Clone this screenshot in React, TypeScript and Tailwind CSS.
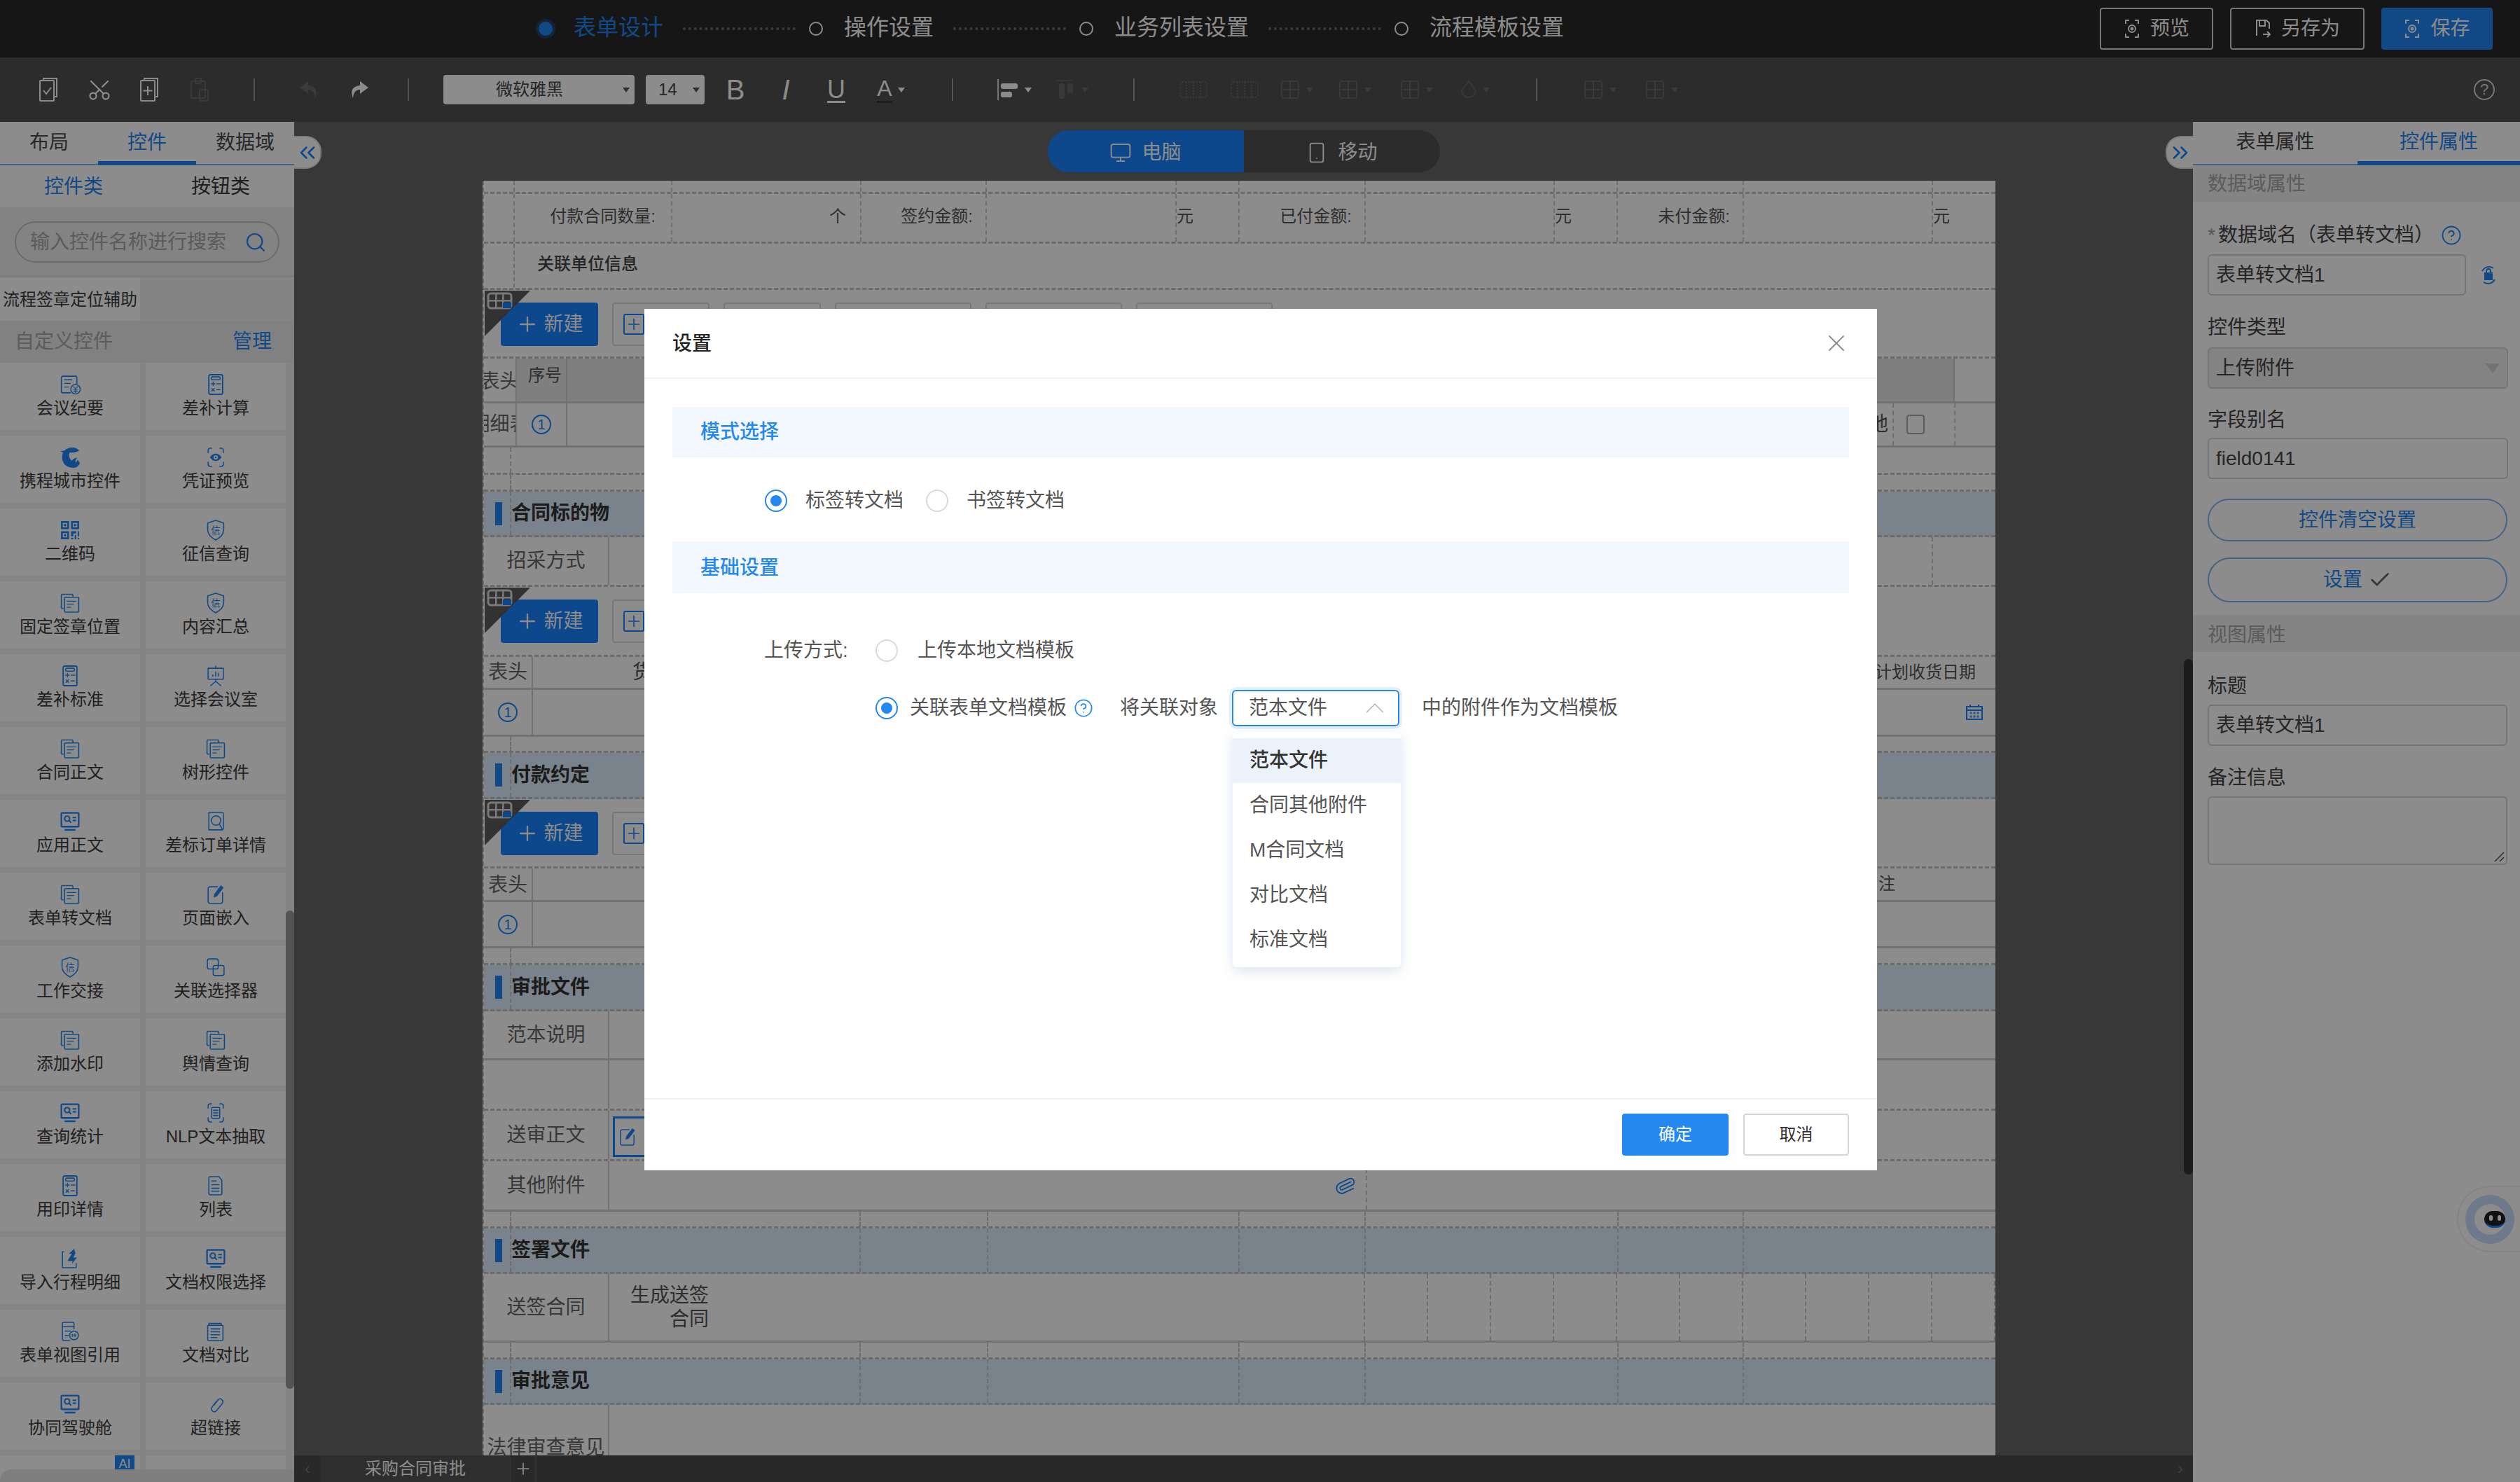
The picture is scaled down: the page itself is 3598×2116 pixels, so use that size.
import React from "react";
import { Scissors, ChevronUp, X, Check, Search, Monitor, Smartphone, Plus, Paperclip, CircleHelp, ChevronsLeft, ChevronsRight } from "lucide-react";

const FONT = "font-['Liberation_Sans','Noto_Sans_CJK_SC',sans-serif]";

type IK = "doc" | "yuan" | "calc" | "fish" | "scan" | "qr" | "shield" | "board" | "card" | "find" | "edit" | "link2" | "nlp" | "list" | "imp" | "quote" | "stack" | "chain";

function GlyphIcon({ k, className = "w-[30px] h-[30px]" }: { k: IK; className?: string }) {
  const common = { fill: "none", stroke: "currentColor", strokeWidth: 1.5, strokeLinecap: "round" as const, strokeLinejoin: "round" as const };
  let body: React.ReactNode = null;
  if (k === "doc") body = <g {...common}><path d="M5 22H4a1.500 1.500 0 0 1-1.500-1.500V4A1.500 1.500 0 0 1 4 2.500h13A1.500 1.500 0 0 1 18.500 4v1.500" /><rect x="7" y="6.500" width="19.500" height="20.500" rx="1.200" /><path d="M10.500 12h12M10.500 16h9M10.500 20.500h5" strokeWidth="1.200" /></g>;
  if (k === "yuan") body = <g {...common}><path d="M24 13V5a2 2 0 0 0-2-2H4.500a2 2 0 0 0-2 2v19a2 2 0 0 0 2 2H15" /><path d="M7 8h10M7 13h8M7 18h5" strokeWidth="1.300" /><circle cx="22" cy="21" r="6.500" /><path d="M19.500 17.500l2.500 3.500 2.500-3.500M22 21v4.500M19.500 22h5M19.500 24h5" strokeWidth="1.100" /></g>;
  if (k === "calc") body = <g {...common}><rect x="5" y="1" width="19" height="27" rx="2" strokeWidth="1.800" /><rect x="8.500" y="4" width="12" height="4" rx="1.500" /><path d="M8.500 13.500h5M11 11v5M16 13.500h5M9 20l3.500 3.500M12.500 20L9 23.500M16 21.500h4.500" strokeWidth="1.400" /></g>;
  if (k === "fish") body = <path fill="currentColor" d="M27 5C25 3 22 1 17 1 13 1 9 3 7 5L1 6l4 2c-2 4-2 10 1 15 3 4 8 6 13 6 5 0 8-3 9-7l-3-4c-1 2-2 3-2 4-2-2-1-5 2-7-3 0-6 1-8 4-4-3-5-8-3-11 4 0 9 0 13-3z" />;
  if (k === "scan") body = <g {...common}><path d="M9 2H7a3 3 0 0 0-3 3v3M20 2h2a3 3 0 0 1 3 3v3M9 27H7a3 3 0 0 1-3-3v-3M20 27h2a3 3 0 0 0 3-3v-3" /><path fill="currentColor" stroke="none" fillRule="evenodd" d="M6.500 14.500C9 11 11.500 9.500 14.500 9.500s5.500 1.500 8 5c-2.500 3.500-5 5-8 5s-5.500-1.500-8-5zM14.500 11.500a3 3 0 1 0 0 6 3 3 0 0 0 0-6z" /><circle cx="14.500" cy="14.500" r="1.200" fill="currentColor" stroke="none" /></g>;
  if (k === "qr") body = <g fill="currentColor"><path fillRule="evenodd" d="M2 2h11v11H2zM4.500 4.500v6h6v-6zM6 6h3v3H6zM16 2h11v11H16zM18.500 4.500v6h6v-6zM20 6h3v3h-3zM2 16h11v11H2zM4.500 18.500v6h6v-6zM6 20h3v3H6z" /><path d="M16 16h7v3h-4v4h-3zM25 16h2v7h-2zM16 25h3v2h-3zM21 21h2v6h-2zM25 25h2v2h-2z" /></g>;
  if (k === "shield") body = <g {...common}><path d="M14.500 1l11 3.500v9.500c0 6-4.500 10.500-11 14-6.500-3.500-11-8-11-14V4.500z" /><text x="14.500" y="19" fontSize="13" textAnchor="middle" fill="currentColor" stroke="none">信</text></g>;
  if (k === "board") body = <g {...common}><path d="M14.500 1v3M4 4h21v15H4zM14.500 19v3M14.500 22l-7 6M14.500 22l7 6" /><path d="M10.500 15v-2M14.500 15V9M18.500 15v-4" /></g>;
  if (k === "card") body = <g><rect x="2.500" y="2.500" width="24" height="19" rx="1.500" fill="none" stroke="currentColor" strokeWidth="2.200" /><circle cx="10.500" cy="10.500" r="3.500" fill="none" stroke="currentColor" strokeWidth="2" /><path d="M13 13l3 3M18 9h5M18 13h5" stroke="currentColor" strokeWidth="2" /><path d="M7 26h15" stroke="currentColor" strokeWidth="2.400" /></g>;
  if (k === "find") body = <g {...common}><path d="M25 5v19a2 2 0 0 1-2 2H5V2h18a2 2 0 0 1 2 2" /><circle cx="15" cy="13" r="6.500" /><path d="M19.500 18l4 7" /></g>;
  if (k === "edit") body = <g {...common}><path d="M17 4H7a3 3 0 0 0-3 3v17a3 3 0 0 0 3 3h14a3 3 0 0 0 3-3V12" /><path fill="currentColor" stroke="none" d="M21.500 2l4 3-9 12-5 2 1-5z" /></g>;
  if (k === "link2") body = <g {...common}><rect x="3" y="3" width="15" height="14" rx="2.500" /><rect x="11" y="12" width="15" height="14" rx="2.500" fill="none" /></g>;
  if (k === "nlp") body = <g {...common}><path d="M9 2H7a3 3 0 0 0-3 3v3M20 2h2a3 3 0 0 1 3 3v3M9 27H7a3 3 0 0 1-3-3v-3M20 27h2a3 3 0 0 0 3-3v-3" /><rect x="9" y="7" width="11" height="15" rx="1" /><path d="M11.500 11h6M11.500 14.500h6M11.500 18h6" /></g>;
  if (k === "list") body = <g {...common}><path d="M19 2H7a2 2 0 0 0-2 2v21a2 2 0 0 0 2 2h14a2 2 0 0 0 2-2V7z" /><path d="M9 8h6M9 13h10M9 18h10M9 22h10" /></g>;
  if (k === "imp") body = <g {...common}><path d="M6 5H4v22h19v-6" /><path fill="currentColor" stroke="none" d="M20 1l-7 7h4l-6 10h7l-1 4 7-9h-5l3-6z" /></g>;
  if (k === "quote") body = <g {...common}><path d="M20 11V4a2 2 0 0 0-2-2H6a2 2 0 0 0-2 2v21a2 2 0 0 0 2 2h8" /><path d="M4 8h16M8 14h7M8 20h4" /><circle cx="20" cy="20" r="6" /><path d="M18 19v2M21.500 19v2" strokeWidth="2" /></g>;
  if (k === "stack") body = <g {...common}><path d="M5 6V3.500h17V6" /><rect x="3.500" y="6" width="21" height="21" rx="1" /><path d="M8 11h12M8 15h12M8 19h12M8 23h8" /></g>;
  if (k === "chain") body = <g {...common}><path d="M12 16l6-8a4 4 0 0 1 6 5l-9 11a4 4 0 0 1-6-5l6-8" /></g>;
  return <svg viewBox="0 0 29 29" className={className}>{body}</svg>;
}

const controls: [IK, string, IK, string][] = [
  ["yuan", "会议纪要", "calc", "差补计算"],
  ["fish", "携程城市控件", "scan", "凭证预览"],
  ["qr", "二维码", "shield", "征信查询"],
  ["doc", "固定签章位置", "shield", "内容汇总"],
  ["calc", "差补标准", "board", "选择会议室"],
  ["doc", "合同正文", "doc", "树形控件"],
  ["card", "应用正文", "find", "差标订单详情"],
  ["doc", "表单转文档", "edit", "页面嵌入"],
  ["shield", "工作交接", "link2", "关联选择器"],
  ["doc", "添加水印", "doc", "舆情查询"],
  ["card", "查询统计", "nlp", "NLP文本抽取"],
  ["calc", "用印详情", "list", "列表"],
  ["imp", "导入行程明细", "card", "文档权限选择"],
  ["quote", "表单视图引用", "stack", "文档对比"],
  ["card", "协同驾驶舱", "chain", "超链接"],
];

function Cell({ k, t }: { k: IK; t: string }) {
  return (
    <div className="w-[200px] h-[96px] bg-white flex flex-col items-center pt-[16px] text-[24px] leading-[32px] text-[#3c3c3c]">
      <span className="text-[#1f86f5] h-[30px] mb-[3px]"><GlyphIcon k={k} /></span>
      <span>{t}</span>
    </div>
  );
}

function LeftPanel() {
  return (
    <aside className="w-[420px] shrink-0 bg-white flex flex-col">
      <div className="h-[62px] shrink-0 flex border-b-2 border-[#7fb6ee] text-[28px] leading-[60px] text-center text-[#4a4a4a]">
        <div className="w-[140px]">布局</div>
        <div className="w-[140px] text-[#1f86f5] border-b-[6px] border-[#1f86f5] h-[62px]">控件</div>
        <div className="w-[140px]">数据域</div>
      </div>
      <div className="h-[60px] shrink-0 flex text-[28px] leading-[62px] text-center text-[#3a3a3a]">
        <div className="w-[210px] text-[#1f86f5]">控件类</div>
        <div className="w-[210px]">按钮类</div>
      </div>
      <div className="h-[100px] shrink-0 bg-[#eeeeee] px-[21px] pt-[20px] border-b-[3px] border-[#e4e4e4]">
        <div className="h-[59px] rounded-full border-2 border-[#c4c4c4] flex items-center pl-[20px] pr-[16px] text-[28px] text-[#a6a6a6]">
          <span className="flex-1">输入控件名称进行搜索</span>
          <Search className="w-[32px] h-[32px] text-[#1f86f5]" strokeWidth={1.6} />
        </div>
      </div>
      <div className="relative flex-1 overflow-hidden bg-[#f0f0f0]">
        <div className="w-[200px] h-[62px] bg-white text-[24px] leading-[64px] text-[#3c3c3c] whitespace-nowrap pl-[4px]">流程签章定位辅助</div>
        <div className="h-[60px] flex items-center justify-between pl-[21px] pr-[32px] text-[28px] text-[#a8a8a8] bg-[#ececec]">
          <span>自定义控件</span>
          <span className="text-[#1f86f5]">管理</span>
        </div>
        <div className="grid grid-cols-[200px_200px] gap-x-[8px] gap-y-[8px]">
          {controls.map((r) => (
            <React.Fragment key={r[1]}>
              <Cell k={r[0]} t={r[1]} />
              <Cell k={r[2]} t={r[3]} />
            </React.Fragment>
          ))}
          <div className="w-[200px] h-[96px] bg-white relative">
            <div className="absolute right-[8px] top-0 w-[28px] h-[20px] bg-[#1f86f5] text-white text-[18px] leading-[24px] text-center overflow-hidden">AI</div>
          </div>
          <div className="w-[200px] h-[96px] bg-white" />
        </div>
        <div className="absolute right-0 top-[904px] w-[12px] h-[683px] rounded-full bg-[#999999]" />
        <div className="absolute left-0 right-0 bottom-0 h-[18px] bg-[#e8e8e8] rounded-tl-[16px]" />
      </div>
    </aside>
  );
}

function Slot({ w, children }: { w: string; children?: React.ReactNode }) {
  return <div className={`shrink-0 flex items-center justify-center ${w}`}>{children}</div>;
}
const Sep = () => <div className="w-[2px] h-[32px] bg-[#9a9a9a]" />;
const Caret = ({ dim }: { dim?: boolean }) => <span className={`ml-[8px] w-0 h-0 border-x-[5px] border-x-transparent border-t-[7px] ${dim ? "border-t-[#6a6a6a]" : "border-t-white"}`} />;
const DimBlock = () => (
  <svg viewBox="0 0 44 28" className="w-[44px] h-[28px] text-[#686868]"><g fill="none" stroke="currentColor" strokeWidth="2" strokeDasharray="2 2"><rect x="3" y="3" width="38" height="22" rx="3" /><path d="M12 3v22M22 3v22M32 3v22" /></g></svg>
);
const DimSq = () => (
  <svg viewBox="0 0 30 30" className="w-[30px] h-[30px] text-[#686868]"><g fill="none" stroke="currentColor" strokeWidth="2"><rect x="3" y="3" width="24" height="24" rx="3" /><path d="M3 15h24M15 3v24" /></g></svg>
);

function Toolbar() {
  return (
    <div className="h-[92px] shrink-0 bg-[#505050] flex items-center pl-[32px] pr-[36px] text-white">
      <Slot w="w-[74px]"><svg viewBox="0 0 30 36" className="w-[30px] h-[36px]"><g fill="none" stroke="currentColor" strokeWidth="2"><path d="M8 5V2h19v26h-4" /><rect x="3" y="5" width="20" height="29" rx="1" /><path d="M8 19l4 5 7-9" /></g></svg></Slot>
      <Slot w="w-[72px]"><Scissors className="w-[36px] h-[36px] -rotate-90" strokeWidth={1.5} /></Slot>
      <Slot w="w-[70px]"><svg viewBox="0 0 30 36" className="w-[30px] h-[36px]"><g fill="none" stroke="currentColor" strokeWidth="2"><path d="M8 5V2h19v26h-4" /><rect x="3" y="5" width="20" height="29" rx="1" /><path d="M13 13v13M6.500 19.500h13" /></g></svg></Slot>
      <Slot w="w-[74px]"><svg viewBox="0 0 30 36" className="w-[30px] h-[36px] text-[#6a6a6a]"><g fill="none" stroke="currentColor" strokeWidth="2"><rect x="3" y="6" width="20" height="24" rx="2" /><rect x="9" y="2" width="8" height="7" rx="1" /><rect x="15" y="18" width="12" height="16" rx="2" /></g></svg></Slot>
      <Slot w="w-[82px]"><Sep /></Slot>
      <Slot w="w-[74px]"><svg viewBox="0 0 30 30" className="w-[30px] h-[30px] text-[#6a6a6a]"><path fill="currentColor" d="M14 3L2 12l12 9v-6c6 0 9 4 10 12 4-10 1-17-10-18z" /></svg></Slot>
      <Slot w="w-[70px]"><svg viewBox="0 0 30 30" className="w-[30px] h-[30px]"><path fill="currentColor" d="M16 3l12 9-12 9v-6c-6 0-9 4-10 12-4-10-1-17 10-18z" /></svg></Slot>
      <Slot w="w-[70px]"><Sep /></Slot>
      <div className="ml-[15px] w-[273px] h-[42px] rounded-[4px] bg-white text-[#444] text-[24px] leading-[42px] flex items-center pl-[75px] pr-[7px]">
        <span className="flex-1">微软雅黑</span><span className="w-0 h-0 border-x-[5px] border-x-transparent border-t-[7px] border-t-[#555]" />
      </div>
      <div className="ml-[16px] w-[84px] h-[42px] rounded-[4px] bg-white text-[#444] text-[24px] flex items-center pl-[18px] pr-[7px]">
        <span className="flex-1">14</span><span className="w-0 h-0 border-x-[5px] border-x-transparent border-t-[7px] border-t-[#555]" />
      </div>
      <Slot w="w-[72px] ml-[8px] text-[40px] leading-none font-normal">B</Slot>
      <Slot w="w-[72px] text-[40px] leading-none italic">I</Slot>
      <Slot w="w-[72px] text-[36px] leading-none underline underline-offset-[4px]">U</Slot>
      <Slot w="w-[84px] text-[32px] leading-none"><span className="border-b-[3px] border-[#333] pb-[2px]">A</span><Caret /></Slot>
      <Slot w="w-[92px]"><Sep /></Slot>
      <Slot w="w-[84px]"><svg viewBox="0 0 32 30" className="w-[32px] h-[30px]"><path d="M2 0v30" stroke="currentColor" strokeWidth="1.500" /><rect x="6" y="6" width="24" height="8" rx="3" fill="currentColor" /><rect x="6" y="18" width="16" height="8" rx="3" fill="currentColor" /></svg><Caret /></Slot>
      <Slot w="w-[80px]"><svg viewBox="0 0 30 30" className="w-[30px] h-[30px] text-[#686868]"><path d="M2 2h24" stroke="currentColor" strokeWidth="1.500" /><rect x="6" y="6" width="8" height="22" rx="3" fill="currentColor" /><rect x="18" y="6" width="8" height="14" rx="3" fill="currentColor" /></svg><Caret dim /></Slot>
      <Slot w="w-[98px]"><Sep /></Slot>
      <Slot w="w-[72px]"><DimBlock /></Slot>
      <Slot w="w-[74px]"><DimBlock /></Slot>
      <Slot w="w-[74px]"><DimSq /><Caret dim /></Slot>
      <Slot w="w-[92px]"><DimSq /><Caret dim /></Slot>
      <Slot w="w-[84px]"><DimSq /><Caret dim /></Slot>
      <Slot w="w-[84px]"><svg viewBox="0 0 24 30" className="w-[24px] h-[30px] text-[#686868]"><path d="M12 3L2 16a10 10 0 0 0 20 0z" fill="none" stroke="currentColor" strokeWidth="2" /></svg><Caret dim /></Slot>
      <Slot w="w-[92px]"><Sep /></Slot>
      <Slot w="w-[88px]"><DimSq /><Caret dim /></Slot>
      <Slot w="w-[88px]"><DimSq /><Caret dim /></Slot>
      <div className="ml-auto w-[30px] h-[30px] rounded-full border-2 border-[#d8d8d8] text-[#d8d8d8] text-[22px] leading-[26px] text-center">?</div>
    </div>
  );
}

function StepDash() {
  return <div className="ml-[28px] mr-[19px] w-[161px] border-t-[4px] border-dotted border-[#6e6e6e]" />;
}
const StepRing = () => <div className="w-[20px] h-[20px] rounded-full border-2 border-white mr-[30px]" />;
const ScanI = () => (
  <svg viewBox="0 0 24 28" className="w-[24px] h-[28px]"><g fill="none" stroke="currentColor" strokeWidth="2"><path d="M8 2H3v5M16 2h5v5M8 26H3v-5M16 26h5v-5" /><circle cx="12" cy="14" r="5" /><circle cx="12" cy="14" r="1.500" fill="currentColor" /></g></svg>
);

function TopBar() {
  return (
    <header className="h-[82px] shrink-0 bg-[#282828] flex items-center pl-[765px] pr-[39px] text-white text-[32px]">
      <div className="w-[28px] h-[28px] rounded-full bg-[#1f86f5]/30 flex items-center justify-center mr-[26px]">
        <div className="w-[20px] h-[20px] rounded-full bg-[#1f86f5]" />
      </div>
      <span className="text-[#1f86f5] mb-[4px]">表单设计</span>
      <StepDash /><StepRing /><span className="mb-[4px]">操作设置</span>
      <StepDash /><StepRing /><span className="mb-[4px]">业务列表设置</span>
      <StepDash /><StepRing /><span className="mb-[4px]">流程模板设置</span>
      <div className="ml-auto flex gap-[24px] text-[28px]">
        <button className="w-[162px] h-[60px] rounded-[4px] border-2 border-[#d8d8d8] flex items-center justify-center gap-[14px]">
          <ScanI />预览
        </button>
        <button className="w-[192px] h-[60px] rounded-[4px] border-2 border-[#d8d8d8] flex items-center justify-center gap-[14px]">
          <svg viewBox="0 0 24 28" className="w-[24px] h-[28px]"><g fill="none" stroke="currentColor" strokeWidth="2"><path d="M3 24V2h14l4 4v8" /><path d="M7 2v8h8V2" /><path d="M12 22h10M18 18l4 4-4 4" /></g></svg>另存为
        </button>
        <button className="w-[159px] h-[60px] rounded-[4px] bg-[#1f86f5] flex items-center justify-center gap-[14px]">
          <ScanI />保存
        </button>
      </div>
    </header>
  );
}

const rowB = "flex shrink-0 border-b-[3px] border-dashed border-[#c4c4c4]";
const rowS = "flex shrink-0 border-b-[3px] border-[#d0d0d0]";
const vd = "border-r-2 border-dashed border-[#c8c8c8]";

function Guides() {
  return (
    <div className="flex h-full w-full">
      <div className={`w-[39px] ${vd}`} />
      <div className={`w-[499px] ${vd}`} />
      <div className={`w-[182px] ${vd}`} />
      <div className={`w-[359px] ${vd}`} />
      <div className={`w-[180px] ${vd}`} />
      <div className={`w-[361px] ${vd}`} />
      <div className={`w-[179px] ${vd}`} />
    </div>
  );
}
function Section({ t, h }: { t: string; h: string }) {
  return (
    <div className={`${rowB} ${h} relative bg-[#deeefd]`}>
      <Guides />
      <div className="absolute left-[16px] top-0 bottom-0 flex items-center font-bold text-[28px] text-[#333]">
        <span className="w-[10px] h-[33px] bg-[#1f86f5] mr-[13px]" />{t}
      </div>
    </div>
  );
}
function Gap({ h }: { h: string }) {
  return <div className={`${rowB} ${h}`}><Guides /></div>;
}
function Label({ t }: { t: string }) {
  return <div className="w-[179px] shrink-0 border-r-2 border-[#d0d0d0] flex items-center justify-center text-[28px] text-[#666]">{t}</div>;
}
function ToolRow({ h, outline }: { h: string; outline: string[] }) {
  return (
    <div className={`${rowB} ${h} relative pt-[18px] pl-[24px] gap-[20px]`}>
      <div className="w-[139px] h-[62px] rounded-[4px] bg-[#1a84ff] text-white text-[28px] flex items-center justify-center gap-[6px]"><Plus className="w-[34px] h-[34px]" strokeWidth={1.6} />新建</div>
      {outline.map((w, i) => <div key={i} className={`h-[62px] rounded-[4px] border-2 border-[#d8d8d8] flex items-center pl-[14px] ${w}`}><span className="text-[#1a84ff]"><Plus className="w-[30px] h-[30px] border-2 border-[#1a84ff] rounded-[3px]" strokeWidth={1.500} /></span></div>)}
      <svg viewBox="0 0 65 65" className="absolute left-[1px] top-[1px] w-[65px] h-[65px]">
        <path d="M0 0H65L0 65z" fill="#5c5c5c" />
        <rect x="5" y="4" width="33" height="21" rx="4" fill="none" stroke="#dcdcdc" strokeWidth="3" />
        <g fill="#dcdcdc"><rect x="15" y="4" width="2.500" height="21" /><rect x="25" y="4" width="2.500" height="21" /><rect x="5" y="13" width="33" height="2.500" /></g>
        <rect x="26" y="17" width="12" height="8" fill="#1a84ff" />
      </svg>
    </div>
  );
}
const Num = () => <div className="w-[28px] h-[28px] rounded-full border-2 border-[#1a84ff] text-[#1a84ff] text-[20px] leading-[24px] text-center">1</div>;

function FormSheet() {
  return (
    <div className="ml-[269px] mt-[12px] w-[2160px] flex-1 min-h-0 overflow-hidden bg-white flex flex-col text-[24px] text-[#555] border-l-2 border-dashed border-[#c8c8c8]">
      <div className={`${rowB} h-[19px]`}>
        <div className={`w-[44px] ${vd}`} /><div className={`w-[225px] ${vd}`} /><div className={`w-[270px] ${vd}`} /><div className={`w-[179px] ${vd}`} /><div className={`w-[271px] ${vd}`} /><div className={`w-[90px] ${vd}`} /><div className={`w-[180px] ${vd}`} /><div className={`w-[270px] ${vd}`} /><div className={`w-[90px] ${vd}`} /><div className={`w-[180px] ${vd}`} /><div className={`w-[270px] ${vd}`} />
      </div>
      <div className={`${rowB} h-[71px] items-stretch leading-[64px]`}>
        <div className={`w-[44px] ${vd}`} />
        <div className={`w-[225px] ${vd} text-right pr-[22px]`}>付款合同数量:</div>
        <div className={`w-[270px] ${vd} text-right pr-[20px]`}>个</div>
        <div className={`w-[179px] ${vd} text-right pr-[18px]`}>签约金额:</div>
        <div className={`w-[271px] ${vd}`} />
        <div className={`w-[90px] ${vd}`}>元</div>
        <div className={`w-[180px] ${vd} text-right pr-[18px]`}>已付金额:</div>
        <div className={`w-[270px] ${vd}`} />
        <div className={`w-[90px] ${vd}`}>元</div>
        <div className={`w-[180px] ${vd} text-right pr-[18px]`}>未付金额:</div>
        <div className={`w-[270px] ${vd}`} />
        <div>元</div>
      </div>
      <div className={`${rowB} h-[66px] items-stretch`}>
        <div className={`w-[44px] ${vd}`} /><div className="pl-[32px] leading-[58px] text-[24px] font-medium text-[#444]">关联单位信息</div>
      </div>
      <ToolRow h="h-[98px]" outline={["w-[139px]", "w-[139px]", "w-[195px]", "w-[195px]", "w-[195px]"]} />
      <div className={`${rowS} h-[64px]`}>
        <div className="w-[47px] overflow-hidden flex items-center justify-center border-r-2 border-[#d0d0d0] text-[28px] text-[#666] whitespace-nowrap pt-[4px]">表头</div>
        <div className="w-[72px] border-r-2 border-[#d0d0d0] bg-[#e8e8e8] pl-[16px] leading-[48px]">序号</div>
        <div className="w-[1981px] bg-[#e8e8e8] border-r-2 border-[#d0d0d0]" />
      </div>
      <div className={`${rowS} h-[63px]`}>
        <div className="w-[47px] overflow-hidden flex items-center justify-center border-r-2 border-[#d0d0d0] text-[28px] text-[#666] whitespace-nowrap"><span className="shrink-0">明细表</span></div>
        <div className="w-[72px] border-r-2 border-[#d0d0d0] flex items-center justify-center"><Num /></div>
        <div className="w-[1892px] flex items-center justify-end pr-[6px]"><span className="text-[28px]">地</span></div>
        <div className="w-[90px] border-l-2 border-dashed border-[#c8c8c8] border-r-2 flex items-center pl-[18px]"><span className="w-[26px] h-[28px] rounded-[4px] border-2 border-[#a8a8a8]" /></div>
      </div>
      <Gap h="h-[39px]" />
      <Gap h="h-[24px]" />
      <Section t="合同标的物" h="h-[65px]" />
      <div className={`${rowB} h-[71px]`}><Label t="招采方式" /><div className={`w-[1890px] ${vd}`} /></div>
      <ToolRow h="h-[100px]" outline={["w-[139px]"]} />
      <div className={`${rowS} h-[47px]`}>
        <div className="w-[70px] border-r-2 border-[#d0d0d0] text-[28px] text-[#666] leading-[44px] text-center">表头</div>
        <div className="w-[2086px] flex justify-between pl-[142px] pr-[26px] text-[#555] leading-[44px]"><span className="text-[28px]">货</span><span>计划收货日期</span></div>
      </div>
      <div className={`${rowS} h-[67px]`}>
        <div className="w-[70px] border-r-2 border-[#d0d0d0] flex items-center justify-center"><Num /></div>
        <div className="w-[2086px] flex items-center justify-end pr-[16px]">
          <svg viewBox="0 0 24 22" className="w-[24px] h-[22px] text-[#1a84ff]"><g fill="none" stroke="currentColor" strokeWidth="2"><rect x="1" y="3" width="22" height="18" /><path d="M1 8h22" /><path d="M6 11h2v2H6zM11 11h2v2h-2zM16 11h2v2h-2zM6 16h2v2H6zM11 16h2v2h-2zM16 16h2v2h-2z" strokeWidth="1" /><path d="M6 0v4M18 0v4" /></g></svg>
        </div>
      </div>
      <Gap h="h-[23px]" />
      <Section t="付款约定" h="h-[66px]" />
      <ToolRow h="h-[99px]" outline={["w-[139px]"]} />
      <div className={`${rowS} h-[48px]`}>
        <div className="w-[70px] border-r-2 border-[#d0d0d0] text-[28px] text-[#666] leading-[48px] text-center">表头</div>
        <div className="ml-[1921px] text-[24px] leading-[44px] text-[#555]">注</div>
      </div>
      <div className={`${rowS} h-[66px]`}>
        <div className="w-[70px] border-r-2 border-[#d0d0d0] flex items-center justify-center"><Num /></div>
      </div>
      <Gap h="h-[24px]" />
      <Section t="审批文件" h="h-[66px]" />
      <div className={`${rowS} h-[70px]`}><Label t="范本说明" /></div>
      <div className={`${rowB} h-[72px]`}><Label t="" /></div>
      <div className={`${rowB} h-[72px]`}><Label t="送审正文" />
        <div className="ml-[5px] mt-[8px] w-[60px] h-[58px] border-[3px] border-[#1a84ff] flex items-center pl-[4px] text-[#1a84ff]"><GlyphIcon k="edit" className="w-[28px] h-[28px]" /></div>
      </div>
      <div className={`${rowS} h-[72px]`}><Label t="其他附件" />
        <div className="w-[1080px] flex items-center justify-end pr-[14px]"><Paperclip className="w-[30px] h-[30px] text-[#1a84ff] rotate-[20deg]" strokeWidth={1.500} /></div>
        <div className="border-l-2 border-dashed border-[#c8c8c8]" />
      </div>
      <Gap h="h-[24px]" />
      <Section t="签署文件" h="h-[65px]" />
      <div className={`${rowS} h-[98px]`}><Label t="送签合同" />
        <div className={`w-[1080px] ${vd} flex items-center`}>
          <div className="w-[148px] pr-[6px] text-right text-[28px] leading-[34px] text-[#555]">生成送签<br />合同</div>
        </div>
        {[0, 1, 2, 3, 4, 5, 6, 7, 8, 9].map((i) => <div key={i} className={`w-[90px] ${vd}`} />)}
      </div>
      <Gap h="h-[24px]" />
      <Section t="审批意见" h="h-[65px]" />
      <div className="flex shrink-0 h-[122px]"><div className="w-[179px] shrink-0 border-r-2 border-[#d0d0d0] flex items-center justify-center text-[28px] text-[#666] whitespace-nowrap">法律审查意见</div></div>
    </div>
  );
}

function Center() {
  return (
    <main className="relative flex-1 min-w-0 bg-[#666666] flex flex-col">
      <div className="flex shrink-0 self-center mt-[12px] w-[560px] h-[60px] rounded-full overflow-hidden text-white text-[28px]">
        <div className="w-[280px] pt-[3px] bg-[#1a84ff] flex items-center justify-center gap-[14px]"><Monitor className="w-[32px] h-[32px]" strokeWidth={1.400} />电脑</div>
        <div className="w-[280px] pt-[3px] bg-[#505050] flex items-center justify-center gap-[14px]"><Smartphone className="w-[32px] h-[32px]" strokeWidth={1.400} />移动</div>
      </div>
      <FormSheet />
      <div className="h-[38px] shrink-0 bg-[#4c4c4c] flex items-center text-[24px] text-white">
        <div className="w-[38px] text-center text-[#777]">‹</div>
        <div className="w-[270px] h-full bg-[#555] text-center leading-[38px]">采购合同审批</div>
        <div className="w-[38px] h-full border-x-2 border-[#5a5a5a] flex items-center justify-center"><Plus className="w-[26px] h-[26px]" strokeWidth={1.600} /></div>
        <div className="ml-auto mr-[14px] text-[#777]">›</div>
      </div>
      <div className="absolute left-0 top-[20px] w-[39px] h-[47px] rounded-r-[22px] bg-white border-2 border-l-0 border-[#e2e2e2] text-[#1a84ff] flex items-center justify-center"><ChevronsLeft className="w-[36px] h-[36px]" strokeWidth={1.800} /></div>
      <div className="absolute right-0 top-[20px] w-[39px] h-[47px] rounded-l-[22px] bg-white border-2 border-r-0 border-[#e2e2e2] text-[#1a84ff] flex items-center justify-center"><ChevronsRight className="w-[36px] h-[36px]" strokeWidth={1.800} /></div>
      <div className="absolute right-0 top-[767px] w-[13px] h-[736px] rounded-full bg-[#333333]" />
    </main>
  );
}

const inputCls = "h-[59px] rounded-[6px] border-2 border-[#d4d4d4] px-[10px] flex items-center text-[28px] text-[#444]";

function RightPanel() {
  return (
    <aside className="relative w-[467px] shrink-0 bg-white flex flex-col text-[28px] text-[#444]">
      <div className="h-[62px] shrink-0 flex border-b-2 border-[#7fb6ee] leading-[58px] text-center">
        <div className="w-[235px]">表单属性</div>
        <div className="w-[232px] h-[62px] text-[#1f86f5] border-b-[6px] border-[#1f86f5]">控件属性</div>
      </div>
      <div className="h-[52px] shrink-0 bg-[#f0f0f0] pl-[21px] leading-[54px] text-[#a8a8a8]">数据域属性</div>
      <div className="px-[21px] pt-[28px] flex flex-col">
        <div className="leading-[40px] whitespace-nowrap flex items-center"><span className="text-[#999] mr-[4px]">*</span>数据域名（表单转文档）<CircleHelp className="w-[30px] h-[30px] text-[#1f86f5] ml-[10px]" strokeWidth={1.500} /></div>
        <div className="flex items-center mt-[7px]">
          <div className={`${inputCls} w-[369px]`}>表单转文档1</div>
          <svg viewBox="0 0 28 32" className="ml-[18px] w-[28px] h-[32px] text-[#1f86f5]"><g fill="none" stroke="currentColor" strokeWidth="2"><path d="M5 10a11 11 0 0 1 16-4M23 22a11 11 0 0 1-16 4" /><rect x="9" y="13" width="10" height="9" fill="currentColor" /><path d="M11 13v-3a3 3 0 0 1 6 0v3" /></g></svg>
        </div>
        <div className="mt-[26px] leading-[40px]">控件类型</div>
        <div className={`${inputCls} mt-[8px] w-[429px] bg-[#eeeeee] justify-between`}>上传附件<span className="w-0 h-0 border-x-[10px] border-x-transparent border-t-[14px] border-t-[#cfcfcf]" /></div>
        <div className="mt-[25px] leading-[40px]">字段别名</div>
        <div className={`${inputCls} mt-[5px] w-[429px]`}>field0141</div>
        <div className="mt-[28px] w-[428px] h-[61px] rounded-full border-2 border-[#7fb6ee] text-[#1f86f5] flex items-center justify-center">控件清空设置</div>
        <div className="mt-[23px] w-[428px] h-[64px] rounded-full border-2 border-[#7fb6ee] text-[#1f86f5] flex items-center justify-center gap-[8px]">设置<Check className="w-[34px] h-[34px] text-[#666]" strokeWidth={2} /></div>
      </div>
      <div className="mt-[18px] h-[53px] shrink-0 bg-[#f0f0f0] pl-[21px] leading-[58px] text-[#a8a8a8]">视图属性</div>
      <div className="px-[21px] pt-[29px] flex flex-col">
        <div className="leading-[40px]">标题</div>
        <div className={`${inputCls} mt-[6px] w-[428px] h-[58px]`}>表单转文档1</div>
        <div className="mt-[26px] leading-[40px]">备注信息</div>
        <div className="relative mt-[6px] w-[428px] h-[98px] rounded-[6px] border-2 border-[#d4d4d4]">
          <svg viewBox="0 0 16 16" className="absolute right-[2px] bottom-[2px] w-[16px] h-[16px] text-[#555]"><path d="M2 15L15 2M9 15l6-6" stroke="currentColor" strokeWidth="1.500" /></svg>
        </div>
      </div>
      <div className="absolute right-0 top-[1519px] w-[90px] h-[95px] rounded-l-[48px] border-2 border-r-0 border-[#f0f0f0] flex items-center pl-[10px]">
        <div className="shrink-0 w-[70px] h-[70px] rounded-full bg-[#c8dcff] flex items-center justify-center">
          <div className="w-[44px] h-[44px] rounded-full bg-white flex items-center justify-start">
            <div className="ml-[14px] shrink-0 w-[30px] h-[24px] rounded-full bg-[#222] border-b-[3px] border-[#1a84ff] flex items-center justify-center gap-[7px]"><span className="w-[5px] h-[8px] rounded-full bg-white" /><span className="w-[5px] h-[8px] rounded-full bg-white" /></div>
          </div>
        </div>
      </div>
    </aside>
  );
}

function Radio({ on }: { on?: boolean }) {
  return on ? (
    <span className="w-[32px] h-[32px] shrink-0 rounded-full border-2 border-[#2488f0] flex items-center justify-center"><span className="w-[16px] h-[16px] rounded-full bg-[#2488f0]" /></span>
  ) : (
    <span className="w-[32px] h-[32px] shrink-0 rounded-full border-2 border-[#d9d9d9]" />
  );
}

function Band({ t, cls }: { t: string; cls: string }) {
  return <div className={`pl-[40px] bg-[#f3f7fe] text-[#2488f0] font-medium text-[28px] ${cls}`}>{t}</div>;
}

function Modal() {
  return (
    <div className="absolute left-[920px] top-[441px] w-[1760px] h-[1230px] bg-white flex flex-col text-[28px] text-[#555]">
      <div className="h-[100px] shrink-0 border-b-2 border-[#edf2f9] flex items-center justify-between pl-[40px] pr-[38px]">
        <span className="font-medium text-[#222] text-[28px] pt-[2px]">设置</span>
        <X className="w-[40px] h-[40px] text-[#8c8c8c]" strokeWidth={1.100} />
      </div>
      <div className="flex-1 min-h-0 px-[40px] pt-[40px]">
        <Band t="模式选择" cls="h-[72px] leading-[72px]" />
        <div className="h-[120px] flex items-center pl-[132px] pt-[4px]">
          <Radio on />
          <span className="ml-[26px]">标签转文档</span>
          <span className="ml-[32px] flex"><Radio /></span>
          <span className="ml-[26px]">书签转文档</span>
        </div>
        <Band t="基础设置" cls="h-[74px] leading-[76px]" />
        <div className="flex items-center mt-[45px] h-[74px] pl-[131px]">
          <span className="w-[159px]">上传方式:</span>
          <Radio />
          <span className="ml-[28px]">上传本地文档模板</span>
        </div>
        <div className="flex items-center h-[70px] pl-[290px] mt-[10px] relative">
          <Radio on />
          <span className="ml-[17px]">关联表单文档模板</span>
          <CircleHelp className="w-[28px] h-[28px] text-[#2488f0] ml-[10px]" strokeWidth={1.500} />
          <span className="ml-[38px]">将关联对象</span>
          <div className="ml-[20px] w-[239px] h-[52px] rounded-[6px] border-2 border-[#2488f0] shadow-[0_0_0_4px_#e6f0fb] flex items-center justify-between pl-[22px] pr-[10px]">
            <span>范本文件</span><ChevronUp className="w-[46px] h-[46px] text-[#b8b8b8]" strokeWidth={0.900} />
          </div>
          <span className="ml-[32px]">中的附件作为文档模板</span>
          <div className="absolute left-[800px] top-[69px] w-[240px] h-[336px] py-[9px] bg-white rounded-[6px] shadow-[0_6px_18px_rgba(60,100,160,0.18)] flex flex-col">
            <div className="h-[64px] shrink-0 pl-[24px] leading-[64px] bg-[#ebf2fa] text-[#333] font-medium">范本文件</div>
            <div className="h-[64px] shrink-0 pl-[24px] leading-[64px]">合同其他附件</div>
            <div className="h-[64px] shrink-0 pl-[24px] leading-[64px]">M合同文档</div>
            <div className="h-[64px] shrink-0 pl-[24px] leading-[64px]">对比文档</div>
            <div className="h-[64px] shrink-0 pl-[24px] leading-[64px]">标准文档</div>
          </div>
        </div>
      </div>
      <div className="h-[103px] shrink-0 border-t-2 border-[#edf2f9] flex items-start justify-end pt-[20px] pr-[40px] gap-[21px] text-[24px]">
        <button className="w-[152px] h-[60px] rounded-[4px] bg-[#2488f0] text-white">确定</button>
        <button className="w-[151px] h-[60px] rounded-[4px] border-2 border-[#d4d4d4] text-[#333]">取消</button>
      </div>
    </div>
  );
}

export default function App() {
  return (
    <div className={`relative w-[3598px] h-[2116px] overflow-hidden flex flex-col ${FONT}`}>
      <TopBar />
      <Toolbar />
      <div className="flex flex-1 min-h-0">
        <LeftPanel />
        <Center />
        <RightPanel />
      </div>
      <div className="absolute inset-0 bg-black/45" />
      <Modal />
    </div>
  );
}
